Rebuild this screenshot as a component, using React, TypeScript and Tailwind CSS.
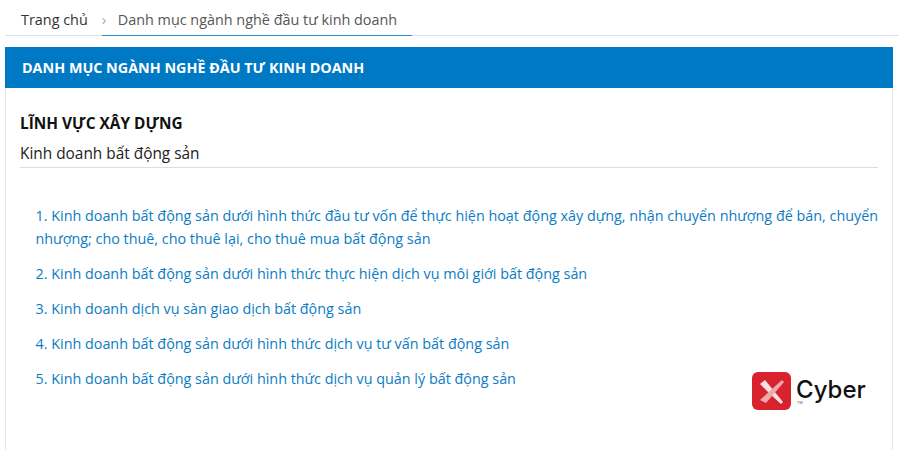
const items = [
  "1. Kinh doanh bất động sản dưới hình thức đầu tư vốn để thực hiện hoạt động xây dựng, nhận chuyển nhượng để bán, chuyển nhượng; cho thuê, cho thuê lại, cho thuê mua bất động sản",
  "2. Kinh doanh bất động sản dưới hình thức thực hiện dịch vụ môi giới bất động sản",
  "3. Kinh doanh dịch vụ sàn giao dịch bất động sản",
  "4. Kinh doanh bất động sản dưới hình thức dịch vụ tư vấn bất động sản",
  "5. Kinh doanh bất động sản dưới hình thức dịch vụ quản lý bất động sản",
]

function CyberLogo() {
  return (
    <div className="absolute left-[746px] top-[325px] flex items-center gap-[5px]">
      <svg width="39" height="38" viewBox="0 0 39 38">
        <rect width="39" height="38" rx="6" fill="#d8232f" />
        <path d="M8 12l5-4 9 11 9 11-2 2-11-10z" fill="#f9e2e2" />
        <path d="M30 8l2 2-18 21-6-3 12-11z" fill="#f0a9aa" />
      </svg>
      <div className="flex flex-col">
        <span className="h-[23px] text-[24px] leading-[23px] font-medium text-[#111] font-['Inter',sans-serif]">
          Cyber
        </span>
        <span className="h-[4px] pl-[1px] text-[4px] leading-[4px] text-[#555]">TM</span>
      </div>
    </div>
  )
}

export default function App() {
  return (
    <div className="h-[450px] w-[900px] overflow-hidden bg-white font-['Open_Sans',sans-serif]">
      <div className="ml-[5px] mr-[1px] flex h-[36px] items-end border-b border-[#e3dcec] pl-[16px]">
        <span className="mb-[6px] text-[14.4px] leading-[19px] text-[#333]">Trang chủ</span>
        <div className="-mb-px ml-[14px] flex flex-col">
          <span className="flex items-center pb-[6px] pr-[15px] text-[14.4px] leading-[19px] text-[#555]">
            <span className="w-[16px] text-[15px] text-[#aaa]">›</span>
            Danh mục ngành nghề đầu tư kinh doanh
          </span>
          <div className="h-px bg-[#2a8ccb]" />
        </div>
      </div>
      <div className="relative ml-[5px] mt-[11px] h-[403px] w-[888px] border-x border-[#e6e6ec]">
        <div className="-mx-px flex h-[41px] items-center bg-[#0079c4] pl-[17px] text-[14.35px] font-bold text-white">
          DANH MỤC NGÀNH NGHỀ ĐẦU TƯ KINH DOANH
        </div>
        <div className="pl-[14px] pr-[14px] pt-[26px]">
          <div className="text-[15.4px] leading-[20px] font-bold text-[#111]">LĨNH VỰC XÂY DỰNG</div>
          <div className="mt-[9px] border-b border-[#ddd] pb-[3px] text-[15.4px] leading-[21px] text-[#222]">
            Kinh doanh bất động sản
          </div>
          <ul className="-mr-[6px] mt-[36px] flex flex-col gap-[12px] pl-[15.5px] text-[14.36px] leading-[23px] text-[#0a7cc4]">
            {items.map((item) => (
              <li key={item}>{item}</li>
            ))}
          </ul>
        </div>
        <CyberLogo />
      </div>
    </div>
  )
}
